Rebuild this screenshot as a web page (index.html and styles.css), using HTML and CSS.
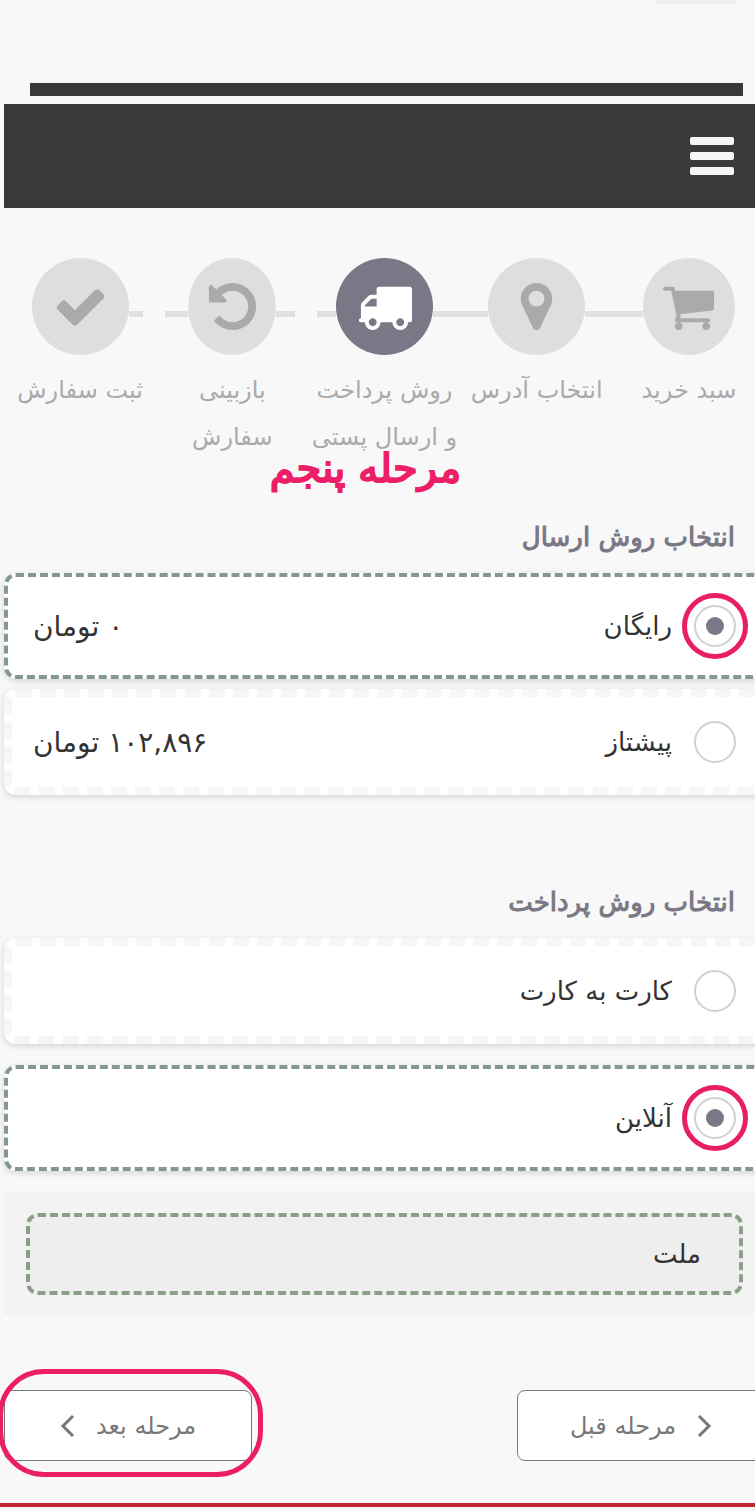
FILE: index.html
```html
<!DOCTYPE html>
<html lang="fa" dir="rtl">
<head>
  <meta charset="UTF-8">
  <meta name="viewport" content="width=device-width, initial-scale=1.0">
  <title>روش پرداخت و ارسال پستی</title>
  <link rel="stylesheet" href="styles.css">
</head>
<body>
  <div class="page">
    <div class="top-tab"></div>
    <div class="top-bar"></div>

    <header class="navbar">
      <button class="menu-btn" type="button" aria-label="منو">
        <span></span>
        <span></span>
        <span></span>
      </button>
    </header>

    <main>
      <ol class="steps">
        <li class="step">
          <div class="step-head">
            <i class="line hidden"></i>
            <span class="circle cart">
              <svg viewBox="0 0 1792 1792"><path d="M704 1536q0 52-38 90t-90 38-90-38-38-90 38-90 90-38 90 38 38 90zm896 0q0 52-38 90t-90 38-90-38-38-90 38-90 90-38 90 38 38 90zm128-1088v512q0 24-16.500 42.500t-40.500 21.500l-1044 122q13 60 13 70 0 16-24 64h920q26 0 45 19t19 45-19 45-45 19h-1024q-26 0-45-19t-19-45q0-11 8-31.500t16-36 21.500-40 15.500-29.500l-177-823h-204q-26 0-45-19t-19-45 19-45 45-19h256q16 0 28.500 6.500t19.500 15.500 13 24.500 8 26 5.500 29.500 4.500 26h1201q26 0 45 19t19 45z"/></svg>
            </span>
            <i class="line"></i>
          </div>
          <p class="step-label">سبد خرید</p>
        </li>
        <li class="step">
          <div class="step-head">
            <i class="line"></i>
            <span class="circle">
              <svg viewBox="0 0 1792 1792"><path d="M1152 640q0-106-75-181t-181-75-181 75-75 181 75 181 181 75 181-75 75-181zm256 0q0 109-33 179l-364 774q-16 33-47.500 52t-67.500 19-67.500-19-46.500-52l-365-774q-33-70-33-179 0-212 150-362t362-150 362 150 150 362z"/></svg>
            </span>
            <i class="line"></i>
          </div>
          <p class="step-label">انتخاب آدرس</p>
        </li>
        <li class="step active">
          <div class="step-head">
            <i class="line"></i>
            <span class="circle">
              <svg viewBox="0 0 1792 1792"><path d="M640 1408q0-52-38-90t-90-38-90 38-38 90 38 90 90 38 90-38 38-90zm-384-512h384v-256h-158q-13 0-22 9l-195 195q-9 9-9 22v30zm1280 512q0-52-38-90t-90-38-90 38-38 90 38 90 90 38 90-38 38-90zm256-1088v1024q0 15-4 26.500t-13.500 18.500-16.500 11.500-23.500 6-22.500 2-25.500 0-22.500-.5q0 106-75 181t-181 75-181-75-75-181h-384q0 106-75 181t-181 75-181-75-75-181h-64q-3 0-22.500.5t-25.500 0-22.500-2-23.500-6-16.500-11.500-13.500-18.500-4-26.500q0-26 19-45t45-19v-320q0-8-.5-35t0-38 2.500-34.500 6.500-37 14-30.500 22.500-30l198-198q19-19 50.500-32t58.500-13h160v-192q0-26 19-45t45-19h1024q26 0 45 19t19 45z"/></svg>
            </span>
            <i class="line gap-left"></i>
          </div>
          <p class="step-label">روش پرداخت و ارسال پستی</p>
        </li>
        <li class="step">
          <div class="step-head">
            <i class="line gap-right"></i>
            <span class="circle undo">
              <svg viewBox="0 0 1792 1792"><path d="M1664 896q0 156-61 298t-164 245-245 164-298 61q-172 0-327-72.500t-264-204.500q-7-10-6.500-22.500t8.500-20.500l137-138q10-9 25-9 16 2 23 12 73 95 179 147t225 52q104 0 198.500-40.500t163.500-109.500 109.500-163.500 40.500-198.500-40.500-198.500-109.500-163.500-163.500-109.500-198.500-40.500q-98 0-188 35.500t-160 101.500l137 138q31 30 14 69-17 40-59 40h-448q-26 0-45-19t-19-45v-448q0-42 40-59 39-17 69 14l130 129q107-101 244.500-156.500t284.500-55.500q156 0 298 61t245 164 164 245 61 298z"/></svg>
            </span>
            <i class="line gap-left"></i>
          </div>
          <p class="step-label">بازبینی سفارش</p>
        </li>
        <li class="step">
          <div class="step-head">
            <i class="line gap-right"></i>
            <span class="circle">
              <svg viewBox="0 0 1792 1792"><path d="M1671 566q0 40-28 68l-724 724-136 136q-28 28-68 28t-68-28l-136-136-362-362q-28-28-28-68t28-68l136-136q28-28 68-28t68 28l294 295 656-657q28-28 68-28t68 28l136 136q28 28 28 68z"/></svg>
            </span>
            <i class="line hidden"></i>
          </div>
          <p class="step-label">ثبت سفارش</p>
        </li>
        <li class="stage-note">مرحله پنجم</li>
      </ol>

      <section class="shipping">
        <h2>انتخاب روش ارسال</h2>
        <div class="option selected">
          <span class="radio-wrap marked"><input type="radio" name="shipping" id="free" checked></span>
          <label for="free">رایگان</label>
          <span class="price">۰ تومان</span>
        </div>
        <div class="option">
          <span class="radio-wrap"><input type="radio" name="shipping" id="express"></span>
          <label for="express">پیشتاز</label>
          <span class="price">۱۰۲,۸۹۶ تومان</span>
        </div>
      </section>

      <section class="payment">
        <h2>انتخاب روش پرداخت</h2>
        <div class="option">
          <span class="radio-wrap"><input type="radio" name="payment" id="card"></span>
          <label for="card">کارت به کارت</label>
        </div>
        <div class="option selected">
          <span class="radio-wrap marked"><input type="radio" name="payment" id="online" checked></span>
          <label for="online">آنلاین</label>
        </div>
        <div class="banks">
          <button class="bank" type="button">ملت</button>
        </div>
      </section>

      <div class="actions">
        <button class="btn" type="button">
          <svg class="chevron" viewBox="0 0 16 24"><path d="M3 2l10 10L3 22"/></svg>
          مرحله قبل
        </button>
        <div class="next-wrap">
          <button class="btn" type="button">
            مرحله بعد
            <svg class="chevron" viewBox="0 0 16 24"><path d="M13 2L3 12l10 10"/></svg>
          </button>
        </div>
      </div>
    </main>
  </div>
  <footer class="bottom-line"></footer>
</body>
</html>
```
FILE: styles.css
```css
* {
  box-sizing: border-box;
}

html {
  overflow-x: hidden;
}

body {
  margin: 0;
  background: #f8f8f8;
  color: #333;
  font-family: "DejaVu Sans", sans-serif;
  font-size: 26px;
  overflow-x: hidden;
}

button {
  font-family: inherit;
  font-size: inherit;
}

/* the content runs a little past the right edge of the window */
.page {
  margin: 0 -10px 0 4px;
}

.top-tab {
  width: 80px;
  height: 4px;
  margin-right: 29px;
  background: #f0f0f0;
}

.top-bar {
  height: 13px;
  margin: 79px 22px 8px 26px;
  background: #393939;
}

.navbar {
  display: flex;
  align-items: center;
  height: 104px;
  padding: 0 31px;
  background: #393939;
}

.menu-btn {
  display: flex;
  flex-direction: column;
  gap: 7px;
  width: 44px;
  padding: 0;
  border: 0;
  background: none;
  cursor: pointer;
}

.menu-btn span {
  height: 8px;
  border-radius: 2px;
  background: #f5f5f5;
}

/* Steps */
.steps {
  position: relative;
  display: grid;
  grid-template-columns: repeat(5, 1fr);
  margin: 50px 0 0;
  padding: 0;
  list-style: none;
}

.step {
  color: #aaa;
  text-align: center;
}

.step-head {
  display: grid;
  grid-template-columns: 1fr auto 1fr;
  align-items: center;
}

.line {
  height: 6px;
  margin-top: 14px;
  background: #e0e0e0;
}

.line.hidden {
  visibility: hidden;
}

.line.gap-left {
  margin-left: 9px;
}

.line.gap-right {
  margin-right: 13px;
}

.circle {
  display: flex;
  align-items: center;
  justify-content: center;
  width: 97px;
  height: 97px;
  border-radius: 50%;
  background: #dedede;
}

.circle.cart {
  width: 92px;
}

.circle.undo {
  width: 88px;
}

.circle svg {
  width: 55px;
  height: 55px;
  flex: none;
  fill: #aaa;
}

.active .circle {
  background: #7a7886;
}

.active .circle svg {
  fill: #fff;
}

.step-label {
  margin: 12px 0 0;
  font-size: 24px;
  line-height: 47px;
}

.stage-note {
  position: absolute;
  top: 185px;
  left: 0;
  right: 38px;
  color: #ed1e68;
  font-size: 40px;
  line-height: 50px;
  text-align: center;
  -webkit-text-stroke: 2px #ed1e68;
}

/* Options */
h2 {
  margin: 0 0 16px;
  padding: 0 30px;
  color: #7a7886;
  font-size: 26px;
  font-weight: normal;
  line-height: 40px;
  -webkit-text-stroke: 1px #7a7886;
}

.shipping {
  display: flow-root;
  margin-top: 56px;
}

.payment {
  margin-top: 87px;
}

.option {
  display: flex;
  align-items: center;
  gap: 22px;
  height: 106px;
  padding: 0 21px;
  border: 8px dashed #f6f6f6;
  border-radius: 12px;
  background: #fff;
  box-shadow: 0 2px 6px rgba(0, 0, 0, 0.15);
}

.option.selected {
  padding: 0 25px;
  border: 4px dashed #82998c;
}

.shipping .option + .option {
  margin-top: 10px;
}

.payment .option + .option {
  margin-top: 21px;
}

.price {
  margin-right: auto;
  font-size: 28px;
}

.radio-wrap {
  position: relative;
  display: flex;
}

.radio-wrap input {
  display: grid;
  place-content: center;
  width: 42px;
  height: 42px;
  margin: 0;
  appearance: none;
  border: 2px solid #d0d0d0;
  border-radius: 50%;
  background: #fff;
}

.radio-wrap input:checked::before {
  content: "";
  width: 18px;
  height: 18px;
  border-radius: 50%;
  background: #7a7886;
}

/* hand-drawn style highlights */
.marked::after {
  content: "";
  position: absolute;
  inset: -12px;
  border: 5px solid #e91e63;
  border-radius: 50%;
  pointer-events: none;
}

.banks {
  margin-top: 20px;
  padding: 22px 22px 20px;
  background: #f3f3f3;
}

.bank {
  display: block;
  width: 100%;
  height: 82px;
  padding: 0 38px;
  border: 4px dashed #8b9f88;
  border-radius: 12px;
  background: #eee;
  color: #333;
  text-align: right;
}

/* Buttons */
.actions {
  display: flex;
  justify-content: space-between;
  margin: 75px 0 42px;
}

.btn {
  display: flex;
  align-items: center;
  justify-content: center;
  gap: 20px;
  width: 248px;
  height: 71px;
  padding: 0;
  border: 1px solid #777;
  border-radius: 8px;
  background: #fff;
  color: #777;
  font-size: 24px;
  cursor: pointer;
}

.chevron {
  width: 16px;
  height: 24px;
  fill: none;
  stroke: #777;
  stroke-width: 3;
}

.next-wrap {
  position: relative;
}

.next-wrap::after {
  content: "";
  position: absolute;
  inset: -21px -11px -16px -6px;
  border: 5px solid #ed1e68;
  border-radius: 46px;
  pointer-events: none;
}

.bottom-line {
  height: 8px;
  border-top: 4px solid #c1272d;
}
```
